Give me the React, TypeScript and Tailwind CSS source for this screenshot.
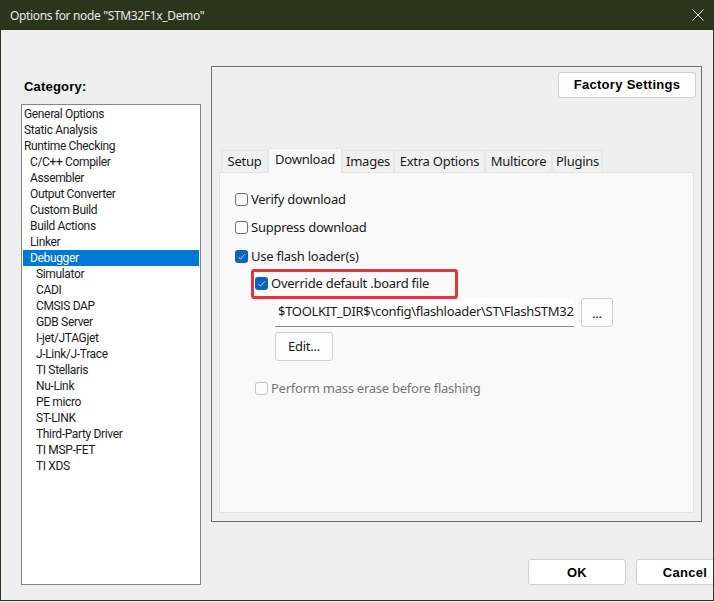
const categories = [
  { name: "General Options", level: 0 },
  { name: "Static Analysis", level: 0 },
  { name: "Runtime Checking", level: 0 },
  { name: "C/C++ Compiler", level: 1 },
  { name: "Assembler", level: 1 },
  { name: "Output Converter", level: 1 },
  { name: "Custom Build", level: 1 },
  { name: "Build Actions", level: 1 },
  { name: "Linker", level: 1 },
  { name: "Debugger", level: 1, selected: true },
  { name: "Simulator", level: 2 },
  { name: "CADI", level: 2 },
  { name: "CMSIS DAP", level: 2 },
  { name: "GDB Server", level: 2 },
  { name: "I-jet/JTAGjet", level: 2 },
  { name: "J-Link/J-Trace", level: 2 },
  { name: "TI Stellaris", level: 2 },
  { name: "Nu-Link", level: 2 },
  { name: "PE micro", level: 2 },
  { name: "ST-LINK", level: 2 },
  { name: "Third-Party Driver", level: 2 },
  { name: "TI MSP-FET", level: 2 },
  { name: "TI XDS", level: 2 },
]

const tabs = [
  { name: "Setup", width: "w-[47px]" },
  { name: "Download", width: "w-[74px]", active: true },
  { name: "Images", width: "w-[52px]" },
  { name: "Extra Options", width: "w-[91px]" },
  { name: "Multicore", width: "w-[67px]" },
  { name: "Plugins", width: "w-[51px]" },
]

function CheckBox({ checked, disabled }: { checked?: boolean; disabled?: boolean }) {
  if (checked) {
    return (
      <span className="flex h-[13px] w-[13px] shrink-0 items-center justify-center rounded-[3px] bg-[#0b62c1]">
        <svg width="9" height="9" viewBox="0 0 10 10" fill="none" stroke="#cfe0f5" strokeWidth="1">
          <path d="M1.5 5.5 L4 8 L8.5 2.5" />
        </svg>
      </span>
    )
  }
  return (
    <span
      className={`h-[13px] w-[13px] shrink-0 rounded-[3px] border bg-[#fcfcfc] ${
        disabled ? "border-[#c4c4c4]" : "border-[#6f6f6f]"
      }`}
    />
  )
}

function DialogButton({ label, className }: { label: string; className: string }) {
  return (
    <button
      className={`shrink-0 rounded-[3px] border border-[#cfcfcf] bg-white font-['Liberation_Sans',sans-serif] text-[13px] font-bold tracking-[0.3px] text-black ${className}`}
    >
      {label}
    </button>
  )
}

export default function App() {
  return (
    <div className="h-[602px] w-[714px] overflow-hidden bg-[#f0f0f0] font-['Noto_Sans',sans-serif] text-[#1a1a1a]">
      <div className="flex h-[601px] flex-col overflow-hidden border-x border-b border-[#2b351c] bg-[#efefef]">
        {/* Title bar */}
        <div className="-mx-px flex h-[30px] shrink-0 items-center justify-between bg-[#2b351c] pl-[10px] pr-[10px] text-[12px] tracking-[-0.35px] text-[#e8e8e4]">
          <span className="pt-px">Options for node "STM32F1x_Demo"</span>
          <svg width="12" height="12" viewBox="0 0 12 12" stroke="#f0f0f0" strokeWidth="1" fill="none">
            <path d="M0.5 0.5 L11.5 11.5 M11.5 0.5 L0.5 11.5" />
          </svg>
        </div>

        <div className="flex flex-1 pl-[20px]">
          {/* Category column */}
          <div className="w-[180px] shrink-0">
            <div className="flex h-[74px] items-end pb-[9px] pl-[3px] font-['Liberation_Sans',sans-serif] text-[13px] font-bold leading-[16px] tracking-[0.2px] text-black">
              Category:
            </div>
            <div className="h-[481px] border border-[#85858d] bg-white px-px pt-px font-['Roboto',sans-serif] text-[12px] tracking-[-0.35px]">
              {categories.map((c) => (
                <div
                  key={c.name}
                  className={`h-[16px] whitespace-nowrap leading-[17px] ${
                    c.selected ? "bg-[#0078d7] text-white" : ""
                  } ${c.level === 0 ? "pl-[1px]" : c.level === 1 ? "pl-[7px]" : "pl-[13px]"}`}
                >
                  {c.name}
                </div>
              ))}
            </div>
          </div>

          {/* Options column */}
          <div className="ml-[10px] shrink-0">
            <div className="mt-[36px] h-[456px] w-[491px] border border-[#6e6e6e] px-[7px] pt-[5px]">
              <div className="-mr-[2px] flex justify-end">
                <DialogButton label="Factory Settings" className="h-[26px] w-[138px]" />
              </div>

              <div className="ml-[2px] mt-[50px] flex h-[24px] items-end text-[13px] tracking-[-0.25px]">
                {tabs.map((t) => (
                  <div
                    key={t.name}
                    className={`flex items-center justify-center border-x border-t border-[#e6e6e6] ${t.width} ${
                      t.active ? "relative z-10 -mb-px h-[25px] bg-[#f9f9f9] pb-[3px] text-[#1a1a1a]" : "h-[22px] bg-[#f0f0f0]"
                    }`}
                  >
                    {t.name}
                  </div>
                ))}
              </div>

              <div className="flex h-[341px] w-[475px] flex-col border border-[#e3e3e3] bg-[#f9f9f9] pl-[15px] text-[13px] tracking-[-0.25px]">
                <label className="mt-[16px] flex h-[20px] items-center gap-[3px]">
                  <CheckBox />
                  <span className="pt-px">Verify download</span>
                </label>
                <label className="mt-[8px] flex h-[20px] items-center gap-[3px]">
                  <CheckBox />
                  <span className="pt-px">Suppress download</span>
                </label>
                <label className="mt-[9px] flex h-[20px] items-center gap-[3px]">
                  <CheckBox checked />
                  <span className="pt-px">Use flash loader(s)</span>
                </label>
                <label className="relative ml-[20px] mt-[7px] flex h-[20px] items-center gap-[3px]">
                  <CheckBox checked />
                  <span className="pt-px">Override default .board file</span>
                  <span className="absolute -left-[4px] -top-[4px] h-[30px] w-[207px] rounded-[3px] border-[3px] border-[#ea3338]" />
                </label>
                <div className="ml-[40px] mt-[5px] flex h-[29px] gap-[7px]">
                  <div className="h-[29px] w-[299px] overflow-hidden whitespace-nowrap border-b border-[#8a8a8a] bg-white pl-[3px] leading-[27px] tracking-[-0.3px]">
                    $TOOLKIT_DIR$\config\flashloader\ST\FlashSTM32
                  </div>
                  <button className="h-[29px] w-[32px] rounded-[3px] border border-[#cfcfcf] bg-[#fcfcfc] leading-[22px]">...</button>
                </div>
                <button className="ml-[40px] mt-[5px] h-[29px] w-[58px] rounded-[3px] border border-[#cfcfcf] bg-[#fcfcfc]">
                  Edit...
                </button>
                <label className="ml-[20px] mt-[17px] flex h-[20px] items-center gap-[3px] text-[#767676]">
                  <CheckBox disabled />
                  <span className="pt-px">Perform mass erase before flashing</span>
                </label>
              </div>
            </div>

            <div className="ml-[317px] mt-[37px] flex gap-[10px]">
              <DialogButton label="OK" className="h-[26px] w-[98px] pt-px" />
              <DialogButton label="Cancel" className="h-[26px] w-[98px] pt-px" />
            </div>
          </div>
        </div>
      </div>
    </div>
  )
}
